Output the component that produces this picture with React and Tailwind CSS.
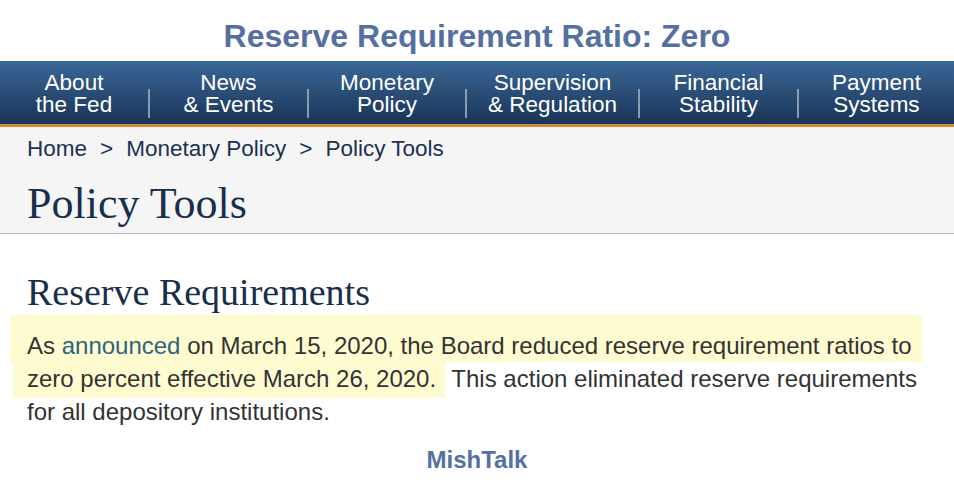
export default function App() {
  const nav = [
    ["About", "the Fed", "w-[148px]"],
    ["News", "& Events", "w-[159px]"],
    ["Monetary", "Policy", "w-[158px]"],
    ["Supervision", "& Regulation", "w-[173px]"],
    ["Financial", "Stability", "w-[159px]"],
    ["Payment", "Systems", "flex-1"],
  ];
  const serif = { fontFamily: '"Liberation Serif", "Times New Roman", serif' };
  return (
    <div className="w-[954px] h-[501px] bg-white overflow-hidden" style={{ fontFamily: '"Liberation Sans", Arial, sans-serif' }}>
      <div className="h-[61px] pt-[20px] text-center">
        <h1 className="text-[32px] font-bold text-[#5470a0] leading-[32px]">Reserve Requirement Ratio: Zero</h1>
      </div>
      <nav className="h-[63px] bg-gradient-to-b from-[#3b6898] to-[#1a3457] border-b-[3px] border-[#cf8a3e] flex box-content">
        {nav.map(([a, b, w], i) => (
          <div key={i} className={`flex items-stretch ${w}`}>
            {i > 0 && <div className="w-[2px] bg-[#8a9bb0] self-end mb-[6px] h-[29px]" />}
            <div className="flex-1 flex flex-col items-center justify-center text-white text-[22.5px] leading-[22px] pt-[2px]">
              <span>{a}</span>
              <span>{b}</span>
            </div>
          </div>
        ))}
      </nav>
      <div className="bg-[#f5f5f5] border-b border-[#b8b8b8] h-[107px] px-[27px]">
        <div className="pt-[9px] text-[22.5px] text-[#1b3150] leading-[26px] flex gap-[13px]">
          <span>Home</span><span>&gt;</span><span>Monetary Policy</span><span>&gt;</span><span>Policy Tools</span>
        </div>
        <h2 className="mt-[18px] text-[44px] leading-[48px] text-[#182f4c]" style={serif}>Policy Tools</h2>
      </div>
      <div className="px-[27px]">
        <h3 className="mt-[38px] text-[38px] leading-[40px] text-[#182f4c]" style={serif}>Reserve Requirements</h3>
        <p className="mt-[17px] text-[24px] leading-[33px] text-[#333] whitespace-nowrap">
          <span className="bg-[#fffbd0] -ml-[17px] pl-[17px] -mr-[10px] pr-[10px] pt-[17px] pb-[3px]">As <span className="text-[#2e6380]">announced</span> on March 15, 2020, the Board reduced reserve requirement ratios to</span>
          <br />
          <span className="bg-[#fffbd0] -ml-[14px] pl-[14px] pt-[4px] pb-[6px] pr-[9px]">zero percent effective March 26, 2020.</span> This action eliminated reserve requirements
          <br />
          for all depository institutions.
        </p>
        <div className="mt-[18px] text-center text-[24px] leading-[28px] font-bold text-[#5470a0]">MishTalk</div>
      </div>
    </div>
  );
}
